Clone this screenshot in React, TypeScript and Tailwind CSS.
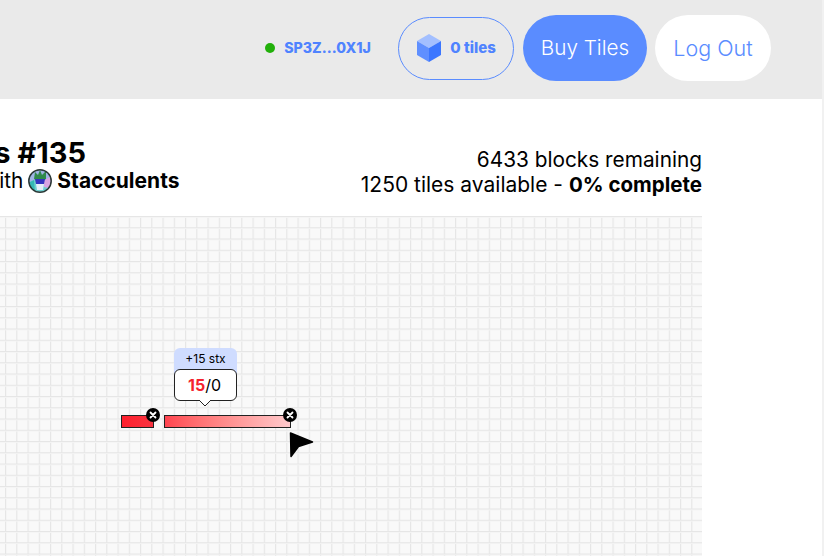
function Cube() {
  return (
    <svg width="26" height="30" viewBox="0 0 26 30">
      <path d="M13 1 25 8 13 15 1 8Z" fill="#a3bfff" />
      <path d="M1 8 13 15V29L1 22Z" fill="#5f8fff" />
      <path d="M25 8 13 15V29L25 22Z" fill="#3b76ff" />
    </svg>
  )
}

function Avatar() {
  return (
    <svg width="24" height="24" viewBox="0 0 24 24" className="shrink-0">
      <clipPath id="av">
        <circle cx="12" cy="12" r="11" />
      </clipPath>
      <g clipPath="url(#av)">
        <rect width="24" height="24" fill="#6fcfd0" />
        <path d="M0 0H24V10L16 14 8 10 0 14Z" fill="#9fb4e4" />
        <path d="M16 11 24 7V20L16 18Z" fill="#d9a4e2" />
        <path d="M0 14 6 11 7 24H0Z" fill="#35b8b4" />
        <path d="M6 10 7 3 10 6 12 1 14 6 18 2 18 10 16 11H8Z" fill="#2f8a4a" />
        <path d="M7 10H17L16 15H8Z" fill="#3434c0" />
        <path d="M8 15H16L15 21H9Z" fill="#e4eef8" />
      </g>
      <circle cx="12" cy="12" r="11.2" fill="none" stroke="#2b3836" strokeWidth="1.5" />
    </svg>
  )
}

function CloseDot({ className }: { className: string }) {
  return (
    <div className={`absolute flex h-[14px] w-[14px] items-center justify-center rounded-full bg-black ${className}`}>
      <svg width="8" height="8" viewBox="0 0 8 8">
        <path d="M1.5 1.5 6.5 6.5M6.5 1.5 1.5 6.5" stroke="#fff" strokeWidth="1.8" strokeLinecap="round" />
      </svg>
    </div>
  )
}

export default function App() {
  return (
    <div className="flex h-[556px] w-[824px] flex-col overflow-hidden border-r-2 border-[#f1f1f1] bg-white font-['Inter',sans-serif] text-black">
      <header className="flex h-[99px] shrink-0 items-center justify-end bg-[#eaeaea] pr-[51px] pb-[3px]">
        <div className="h-[10px] w-[10px] rounded-full bg-[#22b00a]" />
        <span className="ml-[9px] text-[14.2px] font-extrabold text-[#4f83ff]">SP3Z...0X1J</span>
        <div className="ml-[27px] flex h-[63px] w-[116px] items-center justify-center gap-[8px] rounded-full border border-[#5a8cff]">
          <Cube />
          <span className="text-[15px] font-extrabold text-[#4f83ff]">0 tiles</span>
        </div>
        <button className="ml-[9px] h-[66px] w-[124px] rounded-full bg-[#5a8cff] text-[20.7px] font-light text-white">Buy Tiles</button>
        <button className="ml-2 h-[66px] w-[116px] rounded-full bg-white text-[21.5px] font-light text-[#5a8cff]">Log Out</button>
      </header>
      <main className="flex min-h-0 flex-1 flex-col pr-[120px]">
        <div className="flex h-[117px] shrink-0 items-start justify-between pt-[38px]">
          <div>
            <h1 className="-ml-[58px] text-[29px] leading-[32px] font-bold whitespace-nowrap">Tiles #135</h1>
            <div className="-ml-[79px] flex h-[24px] items-center gap-[5px] text-[20.8px] whitespace-nowrap">
              <span>Made with</span>
              <Avatar />
              <span className="text-[21px] font-bold">Stacculents</span>
            </div>
          </div>
          <div className="mt-[10px] text-right text-[20.8px] leading-[25px]">
            <div>6433 blocks remaining</div>
            <div className="text-[21px]">1250 tiles available - <b className="text-[20.5px] font-bold">0% complete</b></div>
          </div>
        </div>
        <section className="relative flex-1 bg-[#f9f9f9] bg-[linear-gradient(#e6e6e6_1px,#f4f4f4_1px,#f4f4f4_2px,transparent_2px),linear-gradient(90deg,#e6e6e6_1px,#f4f4f4_1px,#f4f4f4_2px,transparent_2px)] bg-[size:11.25px_11.25px] bg-[position:5px_0]">
          <div className="absolute top-[199px] left-[121px] h-[13px] w-[33px] border border-[#222] bg-gradient-to-r from-[#ff1e2d] to-[#f8323f]" />
          <CloseDot className="top-[192px] left-[146px]" />
          <div className="absolute top-[199px] left-[164px] h-[13px] w-[127px] border border-[#222] bg-gradient-to-r from-[#ff4450] to-[#ffc9cc]" />
          <CloseDot className="top-[192px] left-[283px]" />
          <div className="absolute top-[132px] left-[174px] flex h-[30px] w-[63px] justify-center rounded-t-[6px] bg-[#cfdcff] pt-[3px] text-[12px] leading-[16px]">+15 stx</div>
          <div className="absolute top-[153px] left-[174px] flex h-[32px] w-[63px] items-center justify-center rounded-[6px] border border-[#222] bg-white pr-[2px] text-[16px]">
            <b className="font-bold text-[#f5222d]">15</b>/0
          </div>
          <svg className="absolute top-[184px] left-[199px]" width="12" height="8" viewBox="0 0 12 8">
            <path d="M0 0 6 6 12 0" fill="#fff" stroke="#222" />
          </svg>
          <svg className="absolute top-[215px] left-[288px]" width="28" height="28" viewBox="0 0 28 28">
            <path d="M2.5 2 24.5 11 10.5 15.5 3 25.5Z" fill="#000" stroke="#000" strokeWidth="1.5" strokeLinejoin="round" />
          </svg>
        </section>
      </main>
    </div>
  )
}
